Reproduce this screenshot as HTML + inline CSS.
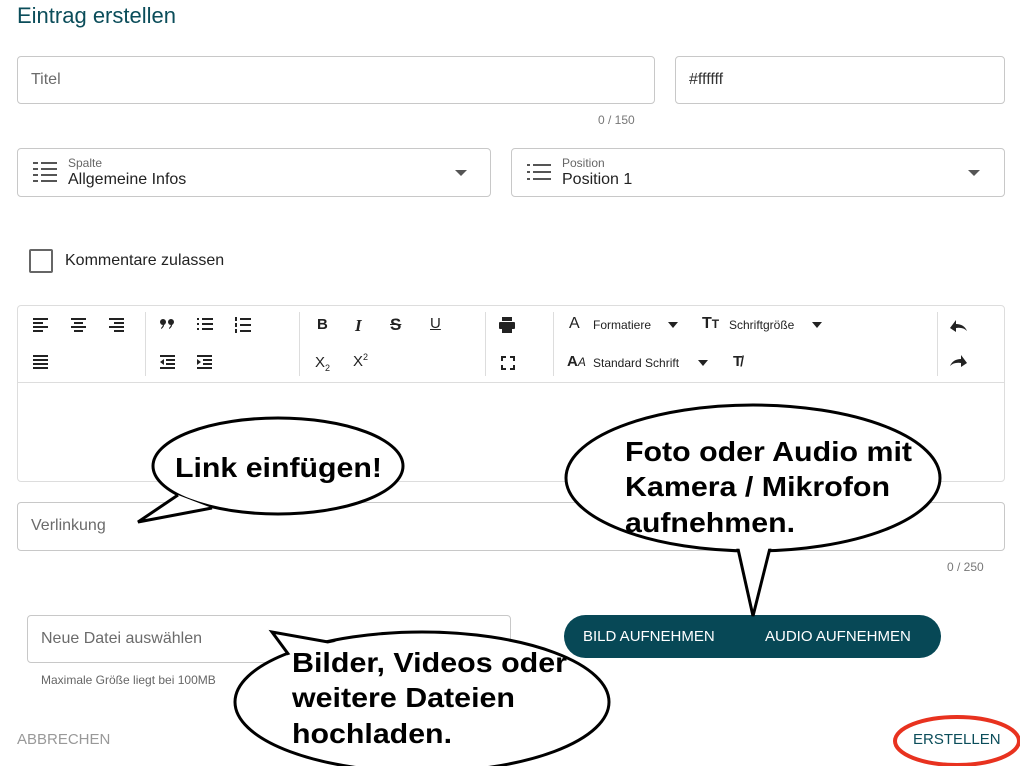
<!DOCTYPE html>
<html><head><meta charset="utf-8"><style>
*{box-sizing:border-box;margin:0;padding:0}
body{width:1020px;height:766px;overflow:hidden;background:#fff;font-family:"Liberation Sans",sans-serif;color:#333;position:relative}
.a{position:absolute}
.box{position:absolute;border:1px solid #c8c8c8;border-radius:4px}
.ph{position:absolute;color:#6b6b6b;font-size:16px}
.ic{position:absolute;font-size:15px;color:#222;font-weight:bold}
.sm{font-size:12px;color:#222}
</style></head><body>
<div class="a" style="left:17px;top:3px;font-size:22px;color:#0b4d5a">Eintrag erstellen</div>

<div class="box" style="left:17px;top:56px;width:638px;height:48px"></div>
<div class="ph" style="left:31px;top:71px">Titel</div>
<div class="box" style="left:675px;top:56px;width:330px;height:48px"></div>
<div class="ph" style="left:689px;top:71px;color:#333">#ffffff</div>
<div class="a" style="left:598px;top:113px;font-size:12px;color:#777">0 / 150</div>

<div class="box" style="left:17px;top:148px;width:474px;height:49px"></div>
<svg class="a" style="left:33px;top:161px" width="24" height="22"><g fill="#555"><rect x="0" y="1" width="5" height="2"/><rect x="8" y="1" width="16" height="2"/><rect x="0" y="7" width="5" height="2"/><rect x="8" y="7" width="16" height="2"/><rect x="0" y="13" width="5" height="2"/><rect x="8" y="13" width="16" height="2"/><rect x="0" y="19" width="5" height="2"/><rect x="8" y="19" width="16" height="2"/></g></svg>
<div class="a" style="left:68px;top:156px;font-size:12px;color:#666">Spalte</div>
<div class="a" style="left:68px;top:171px;font-size:16px;color:#222">Allgemeine Infos</div>
<div class="a" style="left:455px;top:170px;width:0;height:0;border-left:6px solid transparent;border-right:6px solid transparent;border-top:6px solid #555"></div>

<div class="box" style="left:511px;top:148px;width:494px;height:49px"></div>
<svg class="a" style="left:527px;top:163px" width="24" height="20"><g fill="#555"><rect x="0" y="1" width="3" height="2"/><rect x="6" y="1" width="18" height="2"/><rect x="0" y="8" width="3" height="2"/><rect x="6" y="8" width="18" height="2"/><rect x="0" y="15" width="3" height="2"/><rect x="6" y="15" width="18" height="2"/></g></svg>
<div class="a" style="left:562px;top:156px;font-size:12px;color:#666">Position</div>
<div class="a" style="left:562px;top:171px;font-size:16px;color:#222">Position 1</div>
<div class="a" style="left:968px;top:170px;width:0;height:0;border-left:6px solid transparent;border-right:6px solid transparent;border-top:6px solid #555"></div>

<div class="a" style="left:29px;top:249px;width:24px;height:24px;border:2px solid #666;border-radius:2px"></div>
<div class="a" style="left:65px;top:252px;font-size:16px;color:#222">Kommentare zulassen</div>

<div class="box" style="left:17px;top:305px;width:988px;height:177px;border-color:#ddd"></div>
<div class="a" style="left:17px;top:382px;width:988px;height:1px;background:#ddd"></div>
<div class="a" style="left:145px;top:312px;width:1px;height:64px;background:#ddd"></div>
<div class="a" style="left:299px;top:312px;width:1px;height:64px;background:#ddd"></div>
<div class="a" style="left:485px;top:312px;width:1px;height:64px;background:#ddd"></div>
<div class="a" style="left:553px;top:312px;width:1px;height:64px;background:#ddd"></div>
<div class="a" style="left:937px;top:312px;width:1px;height:64px;background:#ddd"></div>
<svg class="a" style="left:0;top:300px" width="1020" height="85"><g fill="#222">
<g transform="translate(33,18)"><rect width="15" height="2"/><rect y="4" width="10" height="2"/><rect y="8" width="15" height="2"/><rect y="12" width="10" height="2"/></g>
<g transform="translate(71,18)"><rect width="15" height="2"/><rect x="3" y="4" width="9" height="2"/><rect y="8" width="15" height="2"/><rect x="3" y="12" width="9" height="2"/></g>
<g transform="translate(109,18)"><rect width="15" height="2"/><rect x="5" y="4" width="10" height="2"/><rect y="8" width="15" height="2"/><rect x="5" y="12" width="10" height="2"/></g>
<g transform="translate(33,55)"><rect width="15" height="2"/><rect y="4" width="15" height="2"/><rect y="8" width="15" height="2"/><rect y="12" width="15" height="2"/></g>
<g transform="translate(160,19)"><circle cx="3" cy="3" r="3"/><path d="M4 3 Q5 8 1 10 L1 9 Q3 7 3 5Z"/><circle cx="11" cy="3" r="3"/><path d="M12 3 Q13 8 9 10 L9 9 Q11 7 11 5Z"/></g>
<g transform="translate(197,18)"><rect width="2" height="2"/><rect x="5" width="11" height="2"/><rect y="5" width="2" height="2"/><rect x="5" y="5" width="11" height="2"/><rect y="10" width="2" height="2"/><rect x="5" y="10" width="11" height="2"/></g>
<g transform="translate(235,17)"><rect width="2" height="4"/><rect x="5" y="1" width="11" height="2"/><rect y="6" width="2" height="4"/><rect x="5" y="7" width="11" height="2"/><rect y="12" width="2" height="4"/><rect x="5" y="13" width="11" height="2"/></g>
<g transform="translate(160,55)"><rect width="15" height="2"/><rect x="6" y="4" width="9" height="2"/><rect x="6" y="8" width="9" height="2"/><rect y="12" width="15" height="2"/><path d="M4 4 L0 7 L4 10Z"/></g>
<g transform="translate(197,55)"><rect width="15" height="2"/><rect x="6" y="4" width="9" height="2"/><rect x="6" y="8" width="9" height="2"/><rect y="12" width="15" height="2"/><path d="M0 4 L4 7 L0 10Z"/></g>
<g transform="translate(499,17)"><rect x="3" width="10" height="4"/><rect y="5" width="16" height="7" rx="1"/><rect x="3" y="10" width="10" height="6"/></g>
<g transform="translate(502,57)" fill="none" stroke="#222" stroke-width="2"><path d="M0 4V0H4M8 0H12V4M12 8V12H8M4 12H0V8"/></g>
<path d="M950 28 L956 20 L956 24 Q964 24 967 31 Q963 27 956 28 L956 32Z"/>
<path d="M967 63 L961 55 L961 59 Q953 59 950 66 Q954 62 961 63 L961 67Z"/>
<path d="M668 22 L678 22 L673 28Z"/><path d="M812 22 L822 22 L817 28Z"/><path d="M698 60 L708 60 L703 66Z"/>
</g></svg>
<div class="ic" style="left:317px;top:316px">B</div>
<div class="ic" style="left:355px;top:316px;font-style:italic;font-family:'Liberation Serif',serif;font-size:17px">I</div>
<div class="ic" style="left:390px;top:315px;text-decoration:line-through;font-size:17px">S</div>
<div class="ic" style="left:430px;top:315px;text-decoration:underline;font-weight:normal">U</div>
<div class="ic" style="left:315px;top:354px;font-weight:normal">X<sub style="font-size:9px">2</sub></div>
<div class="ic" style="left:353px;top:352px;font-weight:normal">X<sup style="font-size:9px">2</sup></div>
<div class="ic" style="left:569px;top:315px;font-weight:normal;font-size:16px">A</div>
<div class="a sm" style="left:593px;top:318px">Formatiere</div>
<div class="ic" style="left:702px;top:315px;font-size:16px">T<span style="font-size:12px">T</span></div>
<div class="a sm" style="left:729px;top:318px">Schriftgröße</div>
<div class="ic" style="left:567px;top:353px;font-size:15px">A<span style="font-style:italic;font-weight:normal;font-size:12px">A</span></div>
<div class="a sm" style="left:593px;top:356px">Standard Schrift</div>
<div class="ic" style="left:733px;top:353px;font-size:15px">T̸</div>

<div class="box" style="left:17px;top:502px;width:988px;height:49px"></div>
<div class="ph" style="left:31px;top:517px">Verlinkung</div>
<div class="a" style="left:947px;top:560px;font-size:12px;color:#777">0 / 250</div>

<div class="box" style="left:27px;top:615px;width:484px;height:48px"></div>
<div class="ph" style="left:41px;top:630px">Neue Datei auswählen</div>
<div class="a" style="left:41px;top:673px;font-size:12px;color:#666">Maximale Größe liegt bei 100MB</div>

<div class="a" style="left:564px;top:615px;width:377px;height:43px;background:#074856;border-radius:22px"></div>
<div class="a" style="left:583px;top:628px;font-size:15px;color:#fff">BILD AUFNEHMEN</div>
<div class="a" style="left:765px;top:628px;font-size:15px;color:#fff">AUDIO AUFNEHMEN</div>

<div class="a" style="left:17px;top:731px;font-size:15px;color:#999">ABBRECHEN</div>
<div class="a" style="left:913px;top:731px;font-size:15px;color:#0b4d5a">ERSTELLEN</div>

<svg class="a" style="left:0;top:0" width="1020" height="766">
<g fill="#fff" stroke="#000" stroke-width="3">
<ellipse cx="278" cy="466" rx="125" ry="48"/>
<path d="M178 495 L138 522 L212 508"/>
<ellipse cx="753" cy="478" rx="187" ry="73"/>
<path d="M736 540 L753 616 L772 540"/>
<ellipse cx="422" cy="702" rx="187" ry="70"/>
<path d="M300 670 L272 632 L345 645"/>
</g>
<g fill="#fff">
<ellipse cx="278" cy="466" rx="123" ry="46"/>
<ellipse cx="753" cy="478" rx="185" ry="71"/>
<ellipse cx="422" cy="702" rx="185" ry="68"/>
</g>
<ellipse cx="957" cy="741" rx="62" ry="24" fill="none" stroke="#e8321f" stroke-width="4"/>
<g font-family="Liberation Sans,sans-serif" font-weight="bold" font-size="28" fill="#000">
<text x="175" y="477" textLength="207" lengthAdjust="spacingAndGlyphs">Link einfügen!</text>
<text x="625" y="461" textLength="287" lengthAdjust="spacingAndGlyphs">Foto oder Audio mit</text>
<text x="625" y="496" textLength="265" lengthAdjust="spacingAndGlyphs">Kamera / Mikrofon</text>
<text x="625" y="532" textLength="170" lengthAdjust="spacingAndGlyphs">aufnehmen.</text>
<text x="292" y="672" textLength="275" lengthAdjust="spacingAndGlyphs">Bilder, Videos oder</text>
<text x="292" y="707" textLength="223" lengthAdjust="spacingAndGlyphs">weitere Dateien</text>
<text x="292" y="743" textLength="160" lengthAdjust="spacingAndGlyphs">hochladen.</text>
</g>
</svg>
</body></html>
